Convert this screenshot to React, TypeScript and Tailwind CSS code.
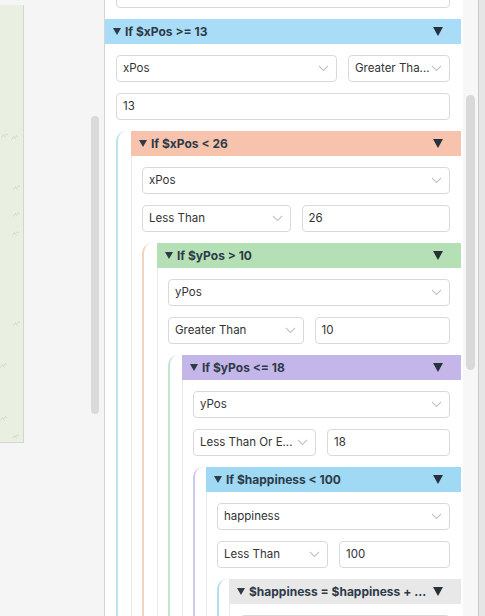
import type { ReactNode } from 'react';

type Field = { label: string; kind: 'select' | 'input'; grow?: string };

const FONT = { fontFamily: 'Inter, "Noto Sans", "Liberation Sans", sans-serif' };

function Chevron() {
  return (
    <svg width="11" height="7" viewBox="0 0 11 7" className="shrink-0" aria-hidden="true">
      <path d="M1 1l4.5 4.5L10 1" fill="none" stroke="#c4c4c4" strokeWidth="1.1" />
    </svg>
  );
}

function Tri({ size }: { size: 'sm' | 'lg' }) {
  return size === 'sm' ? (
    <svg width="8" height="7" viewBox="0 0 8 7" aria-hidden="true">
      <path d="M0 0h8L4 7z" fill="#2e3a46" />
    </svg>
  ) : (
    <svg width="10" height="9" viewBox="0 0 10 9" aria-hidden="true">
      <path d="M0 0h10L5 9z" fill="#26313b" />
    </svg>
  );
}

function Box({ field, className = '' }: { field: Field; className?: string }) {
  return (
    <div
      className={`flex h-[27px] min-w-0 items-center justify-between rounded-[4px] border border-[#d9d9d9] bg-white pl-[6px] pr-[7px] text-[11.5px] text-[#333] ${className}`}
    >
      <span className="whitespace-nowrap">{field.label}</span>
      {field.kind === 'select' ? <Chevron /> : null}
    </div>
  );
}

function Header({ title, bg }: { title: string; bg: string }) {
  return (
    <div className={`flex h-[25px] items-center justify-between pl-[8px] pr-[18px] ${bg}`}>
      <div className="flex min-w-0 items-center gap-[4px] text-[12px] font-bold text-[#2d3a48]">
        <Tri size="sm" />
        <span className="whitespace-nowrap">{title}</span>
      </div>
      <Tri size="lg" />
    </div>
  );
}

function Block({
  title,
  bg,
  line,
  indent,
  rows,
  child,
  outer,
}: {
  title: string;
  bg: string;
  line?: string;
  indent?: string;
  rows: Field[][];
  child?: ReactNode;
  outer?: boolean;
}) {
  return (
    <div className="flex flex-col">
      <Header title={title} bg={bg} />
      <div
        className={`flex flex-col gap-[11px] pt-[11px] ${
          outer ? 'pl-[11px]' : 'border-l border-[#e9e9e9] pl-[10px]'
        }`}
      >
        {rows.map((row, i) => (
          <div key={i} className="mr-[11px] flex gap-[11px]">
            {row.map((f, j) => (
              <Box key={j} field={f} className={f.grow ?? 'flex-1'} />
            ))}
          </div>
        ))}
        {child ? (
          <div className={`rounded-tl-[10px] border-l-2 ${line} ${indent}`}>{child}</div>
        ) : null}
      </div>
    </div>
  );
}

const sel = (label: string, grow?: string): Field => ({ label, kind: 'select', grow });
const inp = (label: string): Field => ({ label, kind: 'input' });

const DOTS = [
  [1, 133],
  [11, 135],
  [13, 185],
  [13, 212],
  [12, 231],
  [13, 321],
  [0, 363],
  [0, 416],
  [12, 434],
];

export default function App() {
  const happiness = (
    <Block
      title="$happiness = $happiness + ..."
      bg="bg-[#e8e8e8]"
      line="border-[#d8d8d8]"
      indent="pl-[10px]"
      rows={[[sel('happiness')]]}
    />
  );

  const happyIf = (
    <Block
      title="If $happiness < 100"
      bg="bg-[#a0d9f3]"
      line="border-[#b4def0]"
      indent="pl-[10px]"
      rows={[[sel('happiness')], [sel('Less Than'), inp('100')]]}
      child={happiness}
    />
  );

  const yPosLe = (
    <Block
      title="If $yPos <= 18"
      bg="bg-[#c4b6e8]"
      line="border-[#d2c8ec]"
      indent="pl-[11px]"
      rows={[[sel('yPos')], [sel('Less Than Or E...'), inp('18')]]}
      child={happyIf}
    />
  );

  const yPosGt = (
    <Block
      title="If $yPos > 10"
      bg="bg-[#b5e0b5]"
      line="border-[#c3e6cf]"
      indent="pl-[12px]"
      rows={[[sel('yPos')], [sel('Greater Than'), inp('10')]]}
      child={yPosLe}
    />
  );

  const xPosLt = (
    <Block
      title="If $xPos < 26"
      bg="bg-[#f7c3ac]"
      line="border-[#f3d2c3]"
      indent="pl-[13px]"
      rows={[[sel('xPos')], [sel('Less Than'), inp('26')]]}
      child={yPosGt}
    />
  );

  return (
    <div className="flex h-[616px] w-[485px] overflow-hidden bg-[#f5f5f5]" style={FONT}>
      <div className="relative flex w-[104px] shrink-0">
        <div className="mt-[5px] h-[438px] w-[24px] border-r border-b border-[#d3d6cf] bg-[#e9f0e2]" />
        {DOTS.map(([x, y], i) => (
          <svg
            key={i}
            width="7"
            height="5"
            viewBox="0 0 7 5"
            className="absolute"
            style={{ left: x, top: y }}
            aria-hidden="true"
          >
            <path d="M0.5 4.5l2-3 2 3M4 2.5l1.5-2 1.5 2" fill="none" stroke="#c8d8b4" strokeWidth="0.8" />
          </svg>
        ))}
        <div className="ml-auto mr-[5px] mt-[116px] h-[298px] w-[8px] rounded-full bg-[#dadada]" />
      </div>

      <div className="flex h-[616px] w-[359px] shrink-0 flex-col overflow-hidden border-l border-[#d4d4d4] bg-white pr-[2px]">
        <div className="-mt-[19px] flex flex-col gap-[11px]">
          <div className="mr-[11px] pl-[11px]">
            <Box field={inp('yPos')} />
          </div>
          <Block
            outer
            title="If $xPos >= 13"
            bg="bg-[#a9dcf6]"
            line="border-[#bde2ec]"
            indent="pl-[13px]"
            rows={[[sel('xPos'), sel('Greater Tha...', 'w-[102px] shrink-0')], [inp('13')]]}
            child={xPosLt}
          />
        </div>
      </div>

      <div className="flex w-[15px] shrink-0 justify-center bg-[#f7f7f7]">
        <div className="mt-[95px] h-[275px] w-[9px] rounded-full bg-[#d9d9d9]" />
      </div>
      <div className="w-[1px] shrink-0 bg-[#c9c9c9]" />
      <div className="flex-1 bg-[#e6e6e6]" />
    </div>
  );
}
